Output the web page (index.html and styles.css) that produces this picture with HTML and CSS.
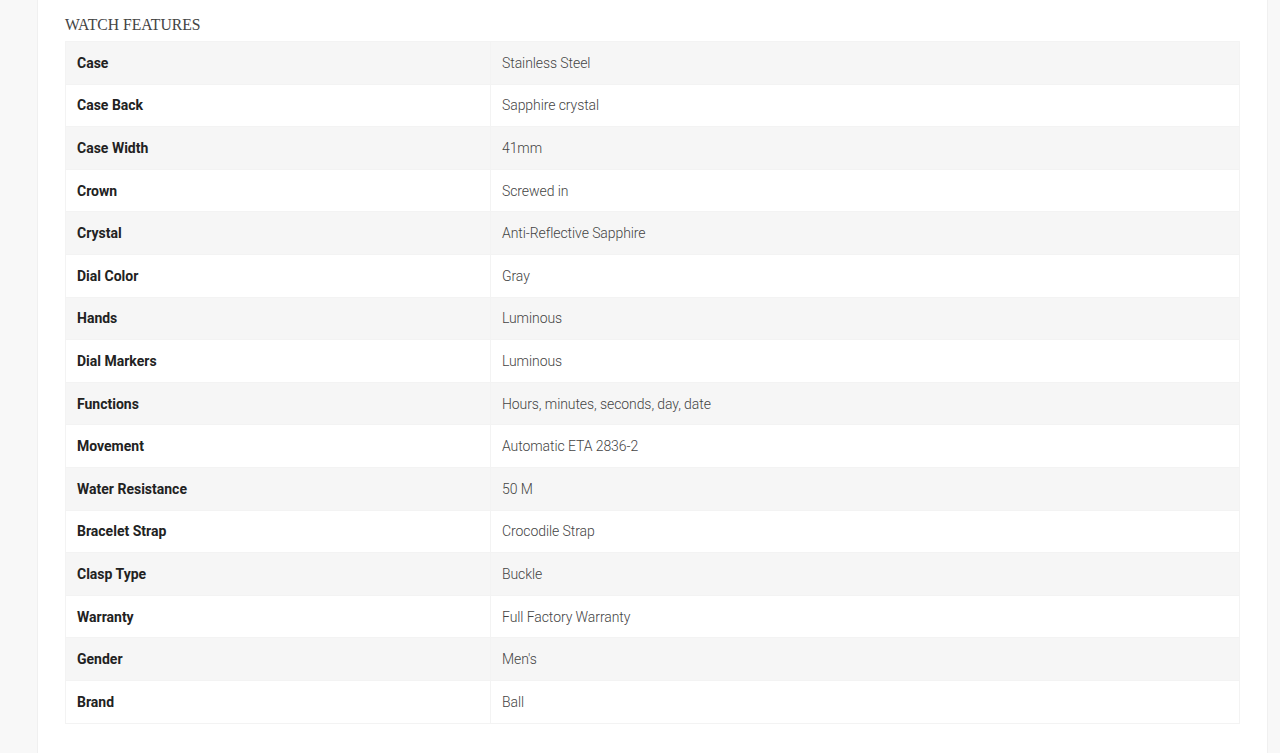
FILE: index.html
```html
<!DOCTYPE html>
<html>
<head>
<meta charset="utf-8">
<link rel="stylesheet" href="styles.css">
</head>
<body>
<div class="page">
  <section class="card">
    <h2 class="title">WATCH FEATURES</h2>
    <table class="specs">
      <colgroup><col class="c1"><col class="c2"></colgroup>
      <tbody>
        <tr><th>Case</th><td>Stainless Steel</td></tr>
        <tr><th>Case Back</th><td>Sapphire crystal</td></tr>
        <tr><th>Case Width</th><td>41mm</td></tr>
        <tr><th>Crown</th><td>Screwed in</td></tr>
        <tr><th>Crystal</th><td>Anti-Reflective Sapphire</td></tr>
        <tr><th>Dial Color</th><td>Gray</td></tr>
        <tr><th>Hands</th><td>Luminous</td></tr>
        <tr><th>Dial Markers</th><td>Luminous</td></tr>
        <tr><th>Functions</th><td>Hours, minutes, seconds, day, date</td></tr>
        <tr><th>Movement</th><td>Automatic ETA 2836-2</td></tr>
        <tr><th>Water Resistance</th><td>50 M</td></tr>
        <tr><th>Bracelet Strap</th><td>Crocodile Strap</td></tr>
        <tr><th>Clasp Type</th><td>Buckle</td></tr>
        <tr><th>Warranty</th><td>Full Factory Warranty</td></tr>
        <tr><th>Gender</th><td>Men's</td></tr>
        <tr><th>Brand</th><td>Ball</td></tr>
      </tbody>
    </table>
  </section>
</div>
</body>
</html>
```
FILE: styles.css
```css
html, body {
  margin: 0;
  padding: 0;
  background: #f8f8f8;
}
body {
  font-family: Roboto, "Liberation Sans", sans-serif;
  height: 753px;
  overflow: hidden;
}
.page {
  display: flex;
  padding: 0 12px 0 37px;
}
.card {
  flex: 1;
  background: #ffffff;
  border-left: 1px solid #f0f0f0;
  border-right: 1px solid #f0f0f0;
  padding: 15px 27px 30px 27px;
  min-height: 753px;
  box-sizing: border-box;
}
.title {
  margin: 0 0 6px 0;
  font-family: "Liberation Serif", serif;
  font-weight: normal;
  font-size: 15.7px;
  line-height: 20px;
  letter-spacing: 0;
  color: #444;
}
.specs {
  width: 100%;
  border-collapse: collapse;
  border: 1px solid #f0f0f0;
}
.c1 { width: 425px; }
.specs tr:nth-child(odd) { background: #f6f6f6; }
.specs tr:nth-child(even) { background: #ffffff; }
.specs th, .specs td {
  height: 42.6px;
  box-sizing: border-box;
  padding: 0 11px;
  text-align: left;
  vertical-align: middle;
  font-size: 14px;
  border: 1px solid #f3f3f3;
}
.specs th {
  font-weight: 700;
  color: #222;
}
.specs td {
  font-weight: 300;
  color: #444;
  letter-spacing: -0.08px;
}
```
